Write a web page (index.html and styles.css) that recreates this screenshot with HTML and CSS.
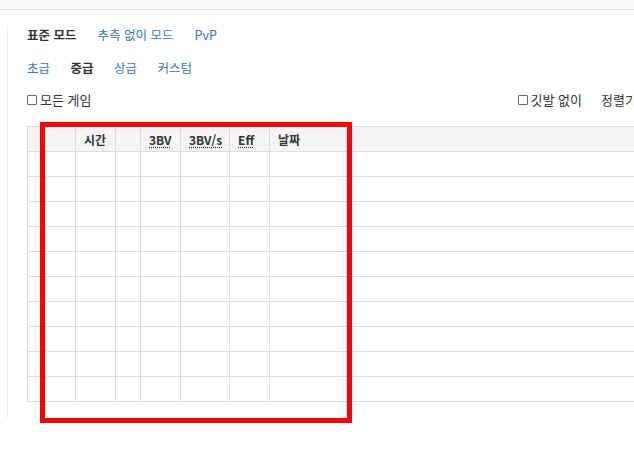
FILE: index.html
```html
<!DOCTYPE html>
<html lang="ko">
<head>
<meta charset="utf-8">
<link rel="stylesheet" href="styles.css">
</head>
<body>
<div class="topbar"></div>
<div class="main">
  <nav class="tabs modes">
    <span class="tab active">표준 모드</span>
    <a class="tab">추측 없이 모드</a>
    <a class="tab">PvP</a>
  </nav>
  <nav class="tabs levels">
    <a class="tab">초급</a>
    <span class="tab active">중급</span>
    <a class="tab">상급</a>
    <a class="tab">커스텀</a>
  </nav>
  <div class="filters">
    <label class="check"><span class="box"></span>모든 게임</label>
    <div class="right">
      <label class="check"><span class="box"></span>깃발 없이</label>
      <span class="sort">정렬기준</span>
    </div>
  </div>
  <table class="records">
    <thead>
      <tr>
        <th class="c1"></th><th class="c2">시간</th><th class="c3"></th><th class="c4"><abbr>3BV</abbr></th><th class="c5"><abbr>3BV/s</abbr></th><th class="c6"><abbr>Eff</abbr></th><th class="c7">날짜</th>
      </tr>
    </thead>
    <tbody>
      <tr><td></td><td></td><td></td><td></td><td></td><td></td><td></td></tr>
      <tr><td></td><td></td><td></td><td></td><td></td><td></td><td></td></tr>
      <tr><td></td><td></td><td></td><td></td><td></td><td></td><td></td></tr>
      <tr><td></td><td></td><td></td><td></td><td></td><td></td><td></td></tr>
      <tr><td></td><td></td><td></td><td></td><td></td><td></td><td></td></tr>
      <tr><td></td><td></td><td></td><td></td><td></td><td></td><td></td></tr>
      <tr><td></td><td></td><td></td><td></td><td></td><td></td><td></td></tr>
      <tr><td></td><td></td><td></td><td></td><td></td><td></td><td></td></tr>
      <tr><td></td><td></td><td></td><td></td><td></td><td></td><td></td></tr>
      <tr><td></td><td></td><td></td><td></td><td></td><td></td><td></td></tr>
    </tbody>
  </table>
</div>
<div class="highlight"></div>
</body>
</html>
```
FILE: styles.css
```css
html, body {
  margin: 0;
  padding: 0;
  overflow: hidden;
  background: #fff;
}
body {
  font-family: "Noto Sans CJK KR", "Noto Sans", sans-serif;
  font-size: 13px;
  color: #333;
  width: 634px;
  height: 457px;
  position: relative;
}
.topbar {
  height: 9px;
  background: #f8f8f8;
  border-bottom: 1px solid #e3e3e3;
}
.main {
  margin: 16px 0 0 7px;
  border-left: 1px solid #eeeeee;
  padding: 0 0 16px 19px;
  width: 720px;
}
.tabs {
  display: flex;
  height: 18px;
  line-height: 18px;
  font-size: 12.5px;
}
.tab {
  color: #337ab7;
  text-decoration: none;
}
.tab.active {
  color: #333;
  font-weight: bold;
}
.modes { gap: 21px; }
.levels { gap: 20.5px; margin-top: 15px; }
.filters {
  display: flex;
  height: 18px;
  line-height: 18px;
  margin-top: 14px;
  width: 634px;
}
.check {
  display: flex;
  align-items: center;
  gap: 3px;
}
.box {
  width: 8px;
  height: 8px;
  border: 1px solid #666;
  border-radius: 1px;
  background: #fff;
}
.right {
  margin-left: auto;
  display: flex;
  gap: 19px;
}
.sort { width: 60px; white-space: nowrap; }
.records {
  margin-top: 17px;
  border-collapse: collapse;
  width: 700px;
  table-layout: fixed;
}
.records th, .records td {
  border: 1px solid #dddddd;
  padding: 0 0 0 8px;
  box-sizing: border-box;
}
.records th {
  background: #f5f5f5;
  font-size: 12px;
  font-weight: bold;
  text-align: left;
  color: #333;
  height: 25px;
}
.records td { height: 25px; }
.records abbr {
  text-decoration: underline dotted;
  text-underline-offset: 2px;
}
.c1 { width: 48px; }
.c2 { width: 40px; }
.c3 { width: 25px; }
.c4 { width: 40px; }
.c5 { width: 49px; }
.c6 { width: 40px; }
.highlight {
  position: absolute;
  left: 40px;
  top: 122px;
  width: 312px;
  height: 301px;
  box-sizing: border-box;
  border: 5px solid #ff0000;
}
```
